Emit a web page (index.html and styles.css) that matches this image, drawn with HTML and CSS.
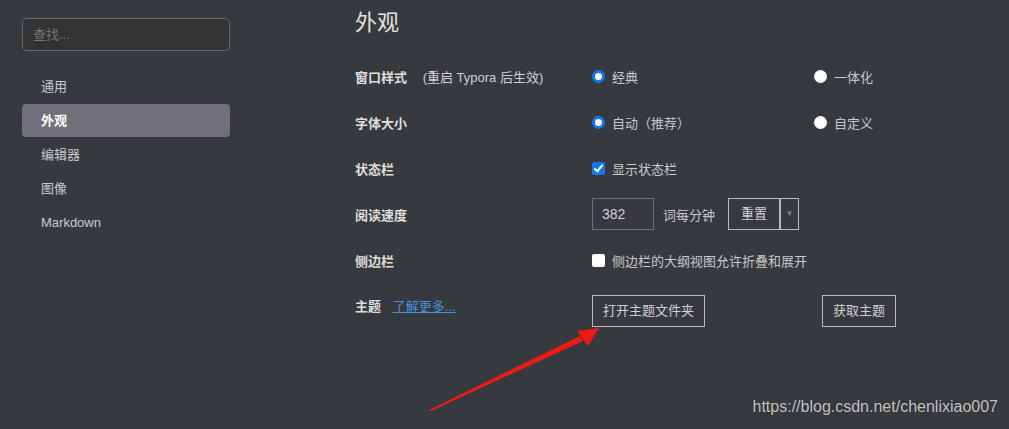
FILE: index.html
```html
<!DOCTYPE html>
<html>

<head>
  <title>偏好设置 - 外观</title>
  <link rel="stylesheet" href="styles.css">
</head>

<body>
  <div id="prefs">
    <div id="sidebar">
      <div class="search-box">查找...</div>
      <ul class="nav">
        <li class="nav-item">通用</li>
        <li class="nav-item active">外观</li>
        <li class="nav-item">编辑器</li>
        <li class="nav-item">图像</li>
        <li class="nav-item">Markdown</li>
      </ul>
    </div>

    <div id="content">
      <h1 class="page-title">外观</h1>

      <div class="row">
        <div class="label">窗口样式 <span class="hint">(重启 Typora 后生效)</span></div>
        <div class="opt"><span class="radio checked"></span>经典</div>
        <div class="opt"><span class="radio"></span>一体化</div>
      </div>

      <div class="row">
        <div class="label">字体大小</div>
        <div class="opt"><span class="radio checked"></span>自动（推荐）</div>
        <div class="opt"><span class="radio"></span>自定义</div>
      </div>

      <div class="row">
        <div class="label">状态栏</div>
        <div class="opt"><span class="check checked"></span>显示状态栏</div>
      </div>

      <div class="row">
        <div class="label">阅读速度</div>
        <div class="opt wide">
          <span class="num-input">382</span>
          <span class="unit">词每分钟</span>
          <span class="split-btn"><span class="btn-main">重置</span><span class="btn-drop">▼</span></span>
        </div>
      </div>

      <div class="row">
        <div class="label">侧边栏</div>
        <div class="opt wide"><span class="check"></span>侧边栏的大纲视图允许折叠和展开</div>
      </div>

      <div class="row theme-row">
        <div class="label">主题 <a class="more" href="#">了解更多...</a></div>
        <div class="opt"><span class="btn">打开主题文件夹</span></div>
        <div class="opt shift"><span class="btn">获取主题</span></div>
      </div>
    </div>
  </div>

  <!-- annotation arrow drawn over the screenshot -->
  <svg class="arrow" width="1009" height="429" viewBox="0 0 1009 429">
    <polygon points="429,410 580,336 583,341 431,411" fill="#f01a12" />
    <polygon points="599,328 577,331 588,346" fill="#f01a12" />
  </svg>

  <div class="watermark">https://blog.csdn.net/chenlixiao007</div>
</body>

</html>
```

FILE: styles.css
```css
body {
  margin: 0;
  padding: 0;
  width: 1009px;
  height: 429px;
  overflow: hidden;
  background-color: #363a3f;
  font-family: "Liberation Sans", "Noto Sans CJK SC", sans-serif;
  font-size: 13px;
  color: #c8c8c8;
}

#prefs {
  display: flex;
}

#sidebar {
  flex: none;
  width: 208px;
  padding: 18px 0 0 22px;
}

.search-box {
  height: 31px;
  line-height: 31px;
  padding-left: 10px;
  background-color: #333333;
  border: 1px solid #65686b;
  border-radius: 5px;
  color: #767676;
}

.nav {
  list-style: none;
  margin: 19px 0 0 0;
  padding: 0;
}

.nav-item {
  height: 33px;
  line-height: 33px;
  margin-bottom: 1px;
  padding-left: 19px;
  border-radius: 4px;
  color: #c9c9cb;
}

.nav-item.active {
  background-color: #717079;
  color: #ffffff;
  font-weight: bold;
}

#content {
  flex: none;
  margin-left: 125px;
  padding-top: 7px;
}

.page-title {
  margin: 0 0 14px 0;
  font-size: 22px;
  line-height: 32px;
  font-weight: normal;
  color: #e2e2e2;
}

.row {
  display: flex;
  align-items: center;
  height: 46px;
}

.label {
  width: 237px;
  font-weight: bold;
  color: #dedede;
}

.hint {
  margin-left: 12px;
  font-weight: normal;
  color: #cfcfcf;
}

.opt {
  width: 222px;
  display: flex;
  align-items: center;
}

.opt.wide {
  width: auto;
}

.opt.shift {
  margin-left: 8px;
}

.radio {
  width: 13px;
  height: 13px;
  border-radius: 50%;
  background-color: #ffffff;
  margin-right: 7px;
  box-sizing: border-box;
}

.radio.checked {
  border: 3px solid #1176f0;
}

.check {
  width: 13px;
  height: 13px;
  background-color: #ffffff;
  border-radius: 2px;
  margin-right: 7px;
  position: relative;
}

.check.checked {
  background-color: #1176f0;
}

.check.checked::after {
  content: "";
  position: absolute;
  left: 4px;
  top: 1px;
  width: 3px;
  height: 7px;
  border: solid #ffffff;
  border-width: 0 2px 2px 0;
  transform: rotate(40deg);
}

.num-input {
  width: 51px;
  height: 30px;
  line-height: 30px;
  padding-left: 9px;
  border: 1px solid #6d7074;
  color: #d0d0d0;
  font-size: 14px;
}

.unit {
  margin: 0 13px 0 9px;
}

.split-btn {
  display: flex;
  border: 1px solid #b9b9b9;
  height: 30px;
}

.btn-main {
  width: 50px;
  line-height: 30px;
  text-align: center;
  border-right: 2px solid #b9b9b9;
  color: #d0d0d0;
}

.btn-drop {
  width: 17px;
  line-height: 30px;
  text-align: center;
  font-size: 8px;
  color: #7f8285;
}

.theme-row {
  height: 56px;
}

.theme-row .label {
  margin-top: -11px;
}

.more {
  margin-left: 8px;
  font-weight: normal;
  color: #4a8fd6;
}

.btn {
  display: inline-block;
  height: 30px;
  line-height: 30px;
  padding: 0 10px;
  border: 1px solid #b9b9b9;
  color: #d0d0d0;
}

.arrow {
  position: absolute;
  left: 0;
  top: 0;
  pointer-events: none;
}

.watermark {
  position: absolute;
  right: 11px;
  top: 398px;
  font-size: 16px;
  color: #c4c4c4;
  text-shadow: 0 0 1px #222;
}
```
